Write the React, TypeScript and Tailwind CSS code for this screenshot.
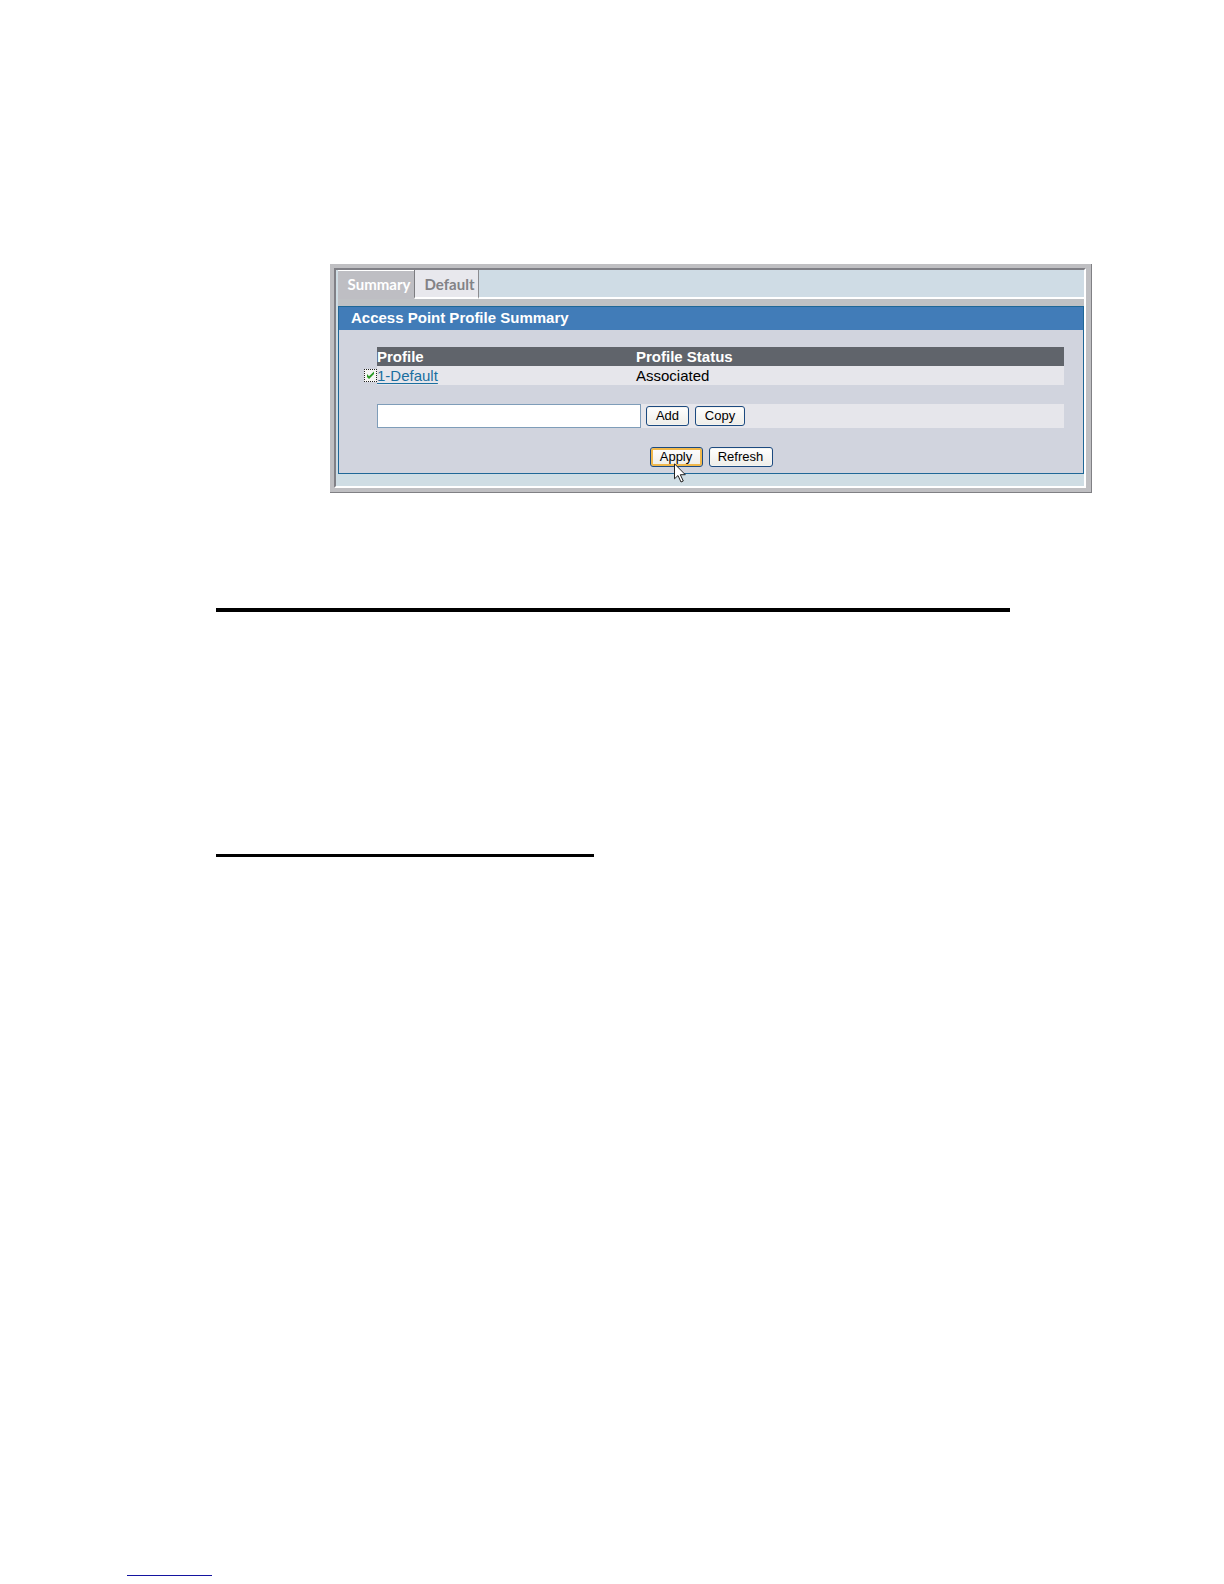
import { ReactNode, useState } from 'react';

interface Profile {
    id: string;
    name: string;
    status: string;
}

const profiles: Profile[] = [{ id: '1', name: '1-Default', status: 'Associated' }];

interface FormButtonProps {
    children: ReactNode;
    active?: boolean;
    className?: string;
}

function FormButton({ children, active = false, className = '' }: FormButtonProps) {
    const stateClass = active
        ? 'inset-ring-2 inset-ring-[#f0b84c]'
        : 'inset-ring-1 inset-ring-[#f4f4f0]';

    return (
        <button
            type="button"
            className={`rounded-[3px] border border-[#1c4a80] bg-linear-to-b from-white to-[#eeede8] text-center text-[13px] leading-[18px] text-black ${stateClass} ${className}`}
        >
            {children}
        </button>
    );
}

function Tabs() {
    return (
        <div role="tablist" className="flex h-[29px] text-[15px] font-bold leading-5">
            <button
                type="button"
                role="tab"
                aria-selected="true"
                className="w-[76px] border-t border-white bg-[#bebec3] pb-[3px] pl-[6px] text-center font-[Lato,sans-serif] text-white"
            >
                Summary
            </button>
            <button
                type="button"
                role="tab"
                aria-selected="false"
                className="w-[65px] border-b-2 border-l border-r border-b-white border-l-[#7c7c80] border-r-[#8c8c90] bg-[#e8e8ed] pl-[6px] text-center font-[Lato,sans-serif] text-[#828286]"
            >
                Default
            </button>
            <div className="grow border-b-2 border-white bg-[#cfdce5]" />
        </div>
    );
}

function ProfileTable() {
    const [selected, setSelected] = useState(['1']);

    const toggle = (id: string) => {
        setSelected((prev) => (prev.includes(id) ? prev.filter((p) => p !== id) : [...prev, id]));
    };

    return (
        <table className="w-full table-fixed border-collapse text-left text-[15px] leading-[19px]">
            <colgroup>
                <col className="w-[13px]" />
                <col className="w-[259px]" />
                <col />
            </colgroup>
            <thead>
                <tr className="text-white">
                    <td className="p-0" />
                    <th className="bg-[#60646b] p-0 font-bold">Profile</th>
                    <th className="bg-[#60646b] p-0 font-bold">Profile Status</th>
                </tr>
            </thead>
            <tbody>
                {profiles.map((profile) => (
                    <tr key={profile.id}>
                        <td className="p-0 align-middle">
                            <label className="grid size-[13px]">
                                <input
                                    type="checkbox"
                                    aria-label={`Select ${profile.name}`}
                                    checked={selected.includes(profile.id)}
                                    onChange={() => toggle(profile.id)}
                                    className="peer col-start-1 row-start-1 size-[13px] appearance-none border border-dotted border-[#222222] bg-[#f6f6f4]"
                                />
                                <svg
                                    viewBox="0 0 13 13"
                                    className="pointer-events-none invisible col-start-1 row-start-1 size-[13px] peer-checked:visible"
                                >
                                    <path d="M3 5v3l2 2 5-5V2.500L5 7.300z" fill="#2a9a24" />
                                </svg>
                            </label>
                        </td>
                        <td className="bg-[#e6e6eb] p-0">
                            <a href="#profile" className="text-[#1b6f9f] underline underline-offset-2">
                                {profile.name}
                            </a>
                        </td>
                        <td className="bg-[#e6e6eb] p-0 text-black">{profile.status}</td>
                    </tr>
                ))}
            </tbody>
        </table>
    );
}

function MousePointer({ className = '' }: { className?: string }) {
    return (
        <svg viewBox="0 0 13 20" className={`pointer-events-none h-5 w-[13px] ${className}`}>
            <path
                d="M.5.800v15l3.500-3.300 3 6.500 2.300-1-3-6.300h5z"
                fill="#ffffff"
                stroke="#222222"
                strokeWidth="1"
            />
        </svg>
    );
}

function ProfilePanel() {
    return (
        <section className="border-4 border-r-[5px] border-[#bfbfc2]">
            <div className="border-2 border-b-white border-l-[#808086] border-r-white border-t-[#808086] bg-[#cfdde4] pb-3 pl-[2px]">
                <Tabs />
                <div className="h-[7px] bg-[#bfc1c4]" />
                <div className="border border-[#1f6797] bg-[#d1d4de]">
                    <h1 className="bg-[#417cb8] pb-[2px] pl-3 text-[15px] font-bold leading-[21px] text-white">
                        Access Point Profile Summary
                    </h1>
                    <div className="pb-[6px] pl-[25px] pr-[19px] pt-[17px]">
                        <ProfileTable />
                        <form className="ml-[13px] mt-[19px] flex items-center bg-[#e6e6eb]">
                            <input
                                type="text"
                                aria-label="Profile name"
                                className="mr-[5px] h-6 w-[264px] border border-[#7f9db9] bg-white px-1 text-[15px]"
                            />
                            <FormButton className="mr-[6px] w-[43px]">Add</FormButton>
                            <FormButton className="w-[50px]">Copy</FormButton>
                        </form>
                    </div>
                    <div className="flex justify-center gap-[6px] pb-[6px] pt-[13px]">
                        <div className="relative flex">
                            <FormButton active className="w-[53px]">
                                Apply
                            </FormButton>
                            <MousePointer className="absolute left-6 top-4" />
                        </div>
                        <FormButton className="w-16">Refresh</FormButton>
                    </div>
                </div>
            </div>
        </section>
    );
}

export default function App() {
    return (
        <main className="bg-white pb-2 font-['Liberation_Sans',Arial,sans-serif]">
            <div className="ml-[330px] mr-[132px] pt-[264px]">
                <div className="border-b border-r border-[#808084]">
                    <ProfilePanel />
                </div>
            </div>
            <hr className="ml-[216px] mr-[214px] mt-[115px] border-t-4 border-black" />
            <hr className="ml-[216px] mt-[242px] w-[378px] border-t-[3px] border-black" />
            <hr className="ml-[127px] mt-[718px] w-[85px] border-[#1414a0]" />
        </main>
    );
}
